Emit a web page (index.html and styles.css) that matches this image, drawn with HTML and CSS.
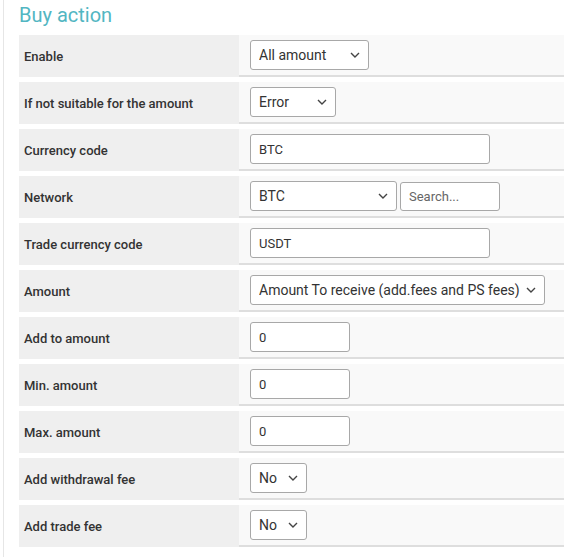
FILE: index.html
```html
<!DOCTYPE html>
<html>
<head>
<meta charset="utf-8">
<link rel="stylesheet" href="styles.css">
</head>
<body>
<div class="panel">
  <h2 class="title">Buy action</h2>
  <div class="rows">
    <div class="row"><div class="label">Enable</div><div class="value"><select class="sel w-all"><option>All amount</option></select></div></div>
    <div class="row"><div class="label">If not suitable for the amount</div><div class="value"><select class="sel w-err"><option>Error</option></select></div></div>
    <div class="row"><div class="label">Currency code</div><div class="value"><input class="inp w-wide" type="text" value="BTC"></div></div>
    <div class="row"><div class="label">Network</div><div class="value"><select class="sel w-net"><option>BTC</option></select><input class="inp w-search" type="text" placeholder="Search..."></div></div>
    <div class="row"><div class="label">Trade currency code</div><div class="value"><input class="inp w-wide" type="text" value="USDT"></div></div>
    <div class="row"><div class="label">Amount</div><div class="value"><select class="sel w-amt"><option>Amount To receive (add.fees and PS fees)</option></select></div></div>
    <div class="row"><div class="label">Add to amount</div><div class="value"><input class="inp w-num" type="text" value="0"></div></div>
    <div class="row"><div class="label">Min. amount</div><div class="value"><input class="inp w-num" type="text" value="0"></div></div>
    <div class="row"><div class="label">Max. amount</div><div class="value"><input class="inp w-num" type="text" value="0"></div></div>
    <div class="row"><div class="label">Add withdrawal fee</div><div class="value"><select class="sel w-no"><option>No</option></select></div></div>
    <div class="row"><div class="label">Add trade fee</div><div class="value"><select class="sel w-no"><option>No</option></select></div></div>
  </div>
</div>
</body>
</html>
```
FILE: styles.css
```css
html, body {
  margin: 0;
  padding: 0;
  background: #fff;
  font-family: Roboto, "Liberation Sans", sans-serif;
  color: #333;
}
body {
  overflow: hidden;
}
.panel {
  margin-left: 3px;
  border-left: 1px solid #e6e6e6;
  padding-left: 15px;
  min-height: 557px;
  box-sizing: border-box;
}
.title {
  margin: 0;
  height: 35px;
  font-size: 20px;
  line-height: 30px;
  font-weight: 400;
  color: #52b6c2;
}
.rows {
  display: flex;
  flex-direction: column;
  gap: 5px;
}
.row {
  display: grid;
  grid-template-columns: 220px 1fr;
  height: 42px;
}
.label {
  background: #efefef;
  font-size: 13px;
  font-weight: 500;
  padding-left: 5px;
  padding-top: 1px;
  display: flex;
  align-items: center;
  color: #333;
}
.value {
  background: #f9f9f9;
  border-bottom: 2px solid #dedede;
  padding-left: 11px;
  display: flex;
  align-items: center;
  gap: 3px;
}
.sel, .inp {
  box-sizing: border-box;
  height: 30px;
  border: 1px solid #a8a8a8;
  border-radius: 3px;
  background-color: #fff;
  font-family: Roboto, "Liberation Sans", sans-serif;
  color: #333;
  margin: 0;
  outline: none;
}
.sel {
  -webkit-appearance: none;
  appearance: none;
  font-size: 14px;
  padding: 0 24px 0 8px;
  background-image: url("data:image/svg+xml;utf8,<svg xmlns='http://www.w3.org/2000/svg' width='10' height='6' viewBox='0 0 10 6'><path d='M1 1 L5 5 L9 1' fill='none' stroke='%23444' stroke-width='1.4'/></svg>");
  background-repeat: no-repeat;
  background-position: right 8px center;
}
.inp {
  font-size: 13px;
  padding: 0 8px;
}
.inp::placeholder {
  color: #666;
}
.w-all { width: 119px; }
.w-err { width: 86px; }
.w-net { width: 147px; }
.w-amt { width: 295px; padding-right: 20px; }
.w-no { width: 57px; }
.w-wide { width: 240px; }
.w-num { width: 100px; }
.w-search { width: 100px; height: 29px; }
```
